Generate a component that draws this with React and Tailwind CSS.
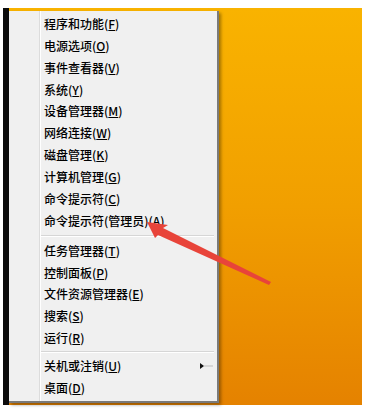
import React from "react";

const groups = [
  [
    ["程序和功能", "F"],
    ["电源选项", "O"],
    ["事件查看器", "V"],
    ["系统", "Y"],
    ["设备管理器", "M"],
    ["网络连接", "W"],
    ["磁盘管理", "K"],
    ["计算机管理", "G"],
    ["命令提示符", "C"],
    ["命令提示符(管理员)", "A"],
  ],
  [
    ["任务管理器", "T"],
    ["控制面板", "P"],
    ["文件资源管理器", "E"],
    ["搜索", "S"],
    ["运行", "R"],
  ],
  [
    ["关机或注销", "U", true],
    ["桌面", "D"],
  ],
];

const MenuRow = ({ label, hotkey, sub }) => (
  <div className="relative flex h-[22px] items-center pl-[35px] text-[12px] font-medium text-black">
    <span>
      {label}(<span className="underline underline-offset-[1px]">{hotkey}</span>)
    </span>
    {sub && (
      <svg className="absolute left-[191px] top-[8px]" width="14" height="6" viewBox="0 0 14 6">
        <polygon points="0,0 4,3 0,6" fill="#111" />
        <line x1="4" y1="3" x2="13" y2="3" stroke="#bdbdbd" strokeWidth="1" />
      </svg>
    )}
  </div>
);

const Separator = ({ space }) => (
  <div className={`ml-[31px] mr-[3px] flex flex-col ${space}`}>
    <div className="h-px bg-[#d6d6d6]" />
    <div className="h-px bg-white" />
  </div>
);

export default function App() {
  return (
    <div
      className="relative h-[410px] w-[368px] bg-white"
      style={{ fontFamily: '"Noto Sans CJK SC", "Noto Sans", sans-serif' }}
    >
      <div className="absolute left-[3px] top-[8px] flex h-[397px] w-[359px] bg-linear-to-b from-[#f9b300] via-[#f19f00] to-[#e58200]">
        <div className="w-[6px] shrink-0 bg-[#0c0c0c]" />
        <div className="relative mt-[3px] mb-[2px] flex w-[210px] shrink-0 flex-col border-r-2 border-b-2 border-[#7a7a7a] bg-[#f0f0f0] pt-[2px] pb-[2px] shadow-[2px_2px_3px_rgba(0,0,0,0.35)]">
          <div className="absolute left-[30px] top-0 bottom-0 flex">
            <div className="w-px bg-[#dcdcdc]" />
            <div className="w-px bg-white" />
          </div>
          {groups[0].map(([l, k]) => (
            <MenuRow key={l} label={l} hotkey={k} />
          ))}
          <Separator space="my-[3px]" />
          {groups[1].map(([l, k]) => (
            <MenuRow key={l} label={l} hotkey={k} />
          ))}
          <Separator space="my-[2px]" />
          {groups[2].map(([l, k, s]) => (
            <MenuRow key={l} label={l} hotkey={k} sub={s} />
          ))}
        </div>
        <div className="flex-1" />
      </div>
      <svg className="absolute left-0 top-0" width="368" height="410" viewBox="0 0 368 410">
        <polygon
          points="147,222 168,225 163,228 271,282 269,285 158,235 155,238"
          fill="#e8443a"
        />
      </svg>
    </div>
  );
}
